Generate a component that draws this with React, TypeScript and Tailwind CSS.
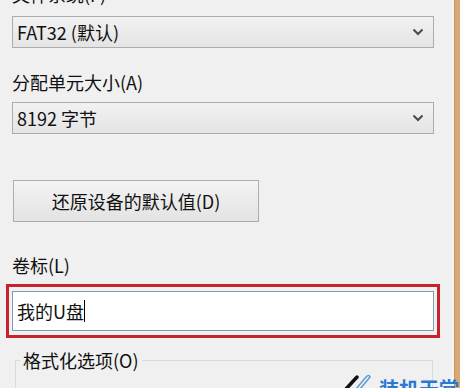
import React from "react";

const FONT = "font-['Noto_Sans_CJK_SC','Noto_Sans',sans-serif]";

const Chevron: React.FC = () => (
  <svg width="12" height="8" viewBox="0 0 12 8" aria-hidden="true">
    <path d="M1.5 1.5 L6 6 L10.5 1.5" fill="none" stroke="#4a4a4a" strokeWidth="2" />
  </svg>
);

const Select: React.FC<{ value: string }> = ({ value }) => (
  <div className="ml-[12px] w-[422px] h-[32px] shrink-0 border border-[#acacac] bg-gradient-to-b from-[#f2f2f2] to-[#e4e4e4] flex items-center justify-between pl-[4px] pr-[9px]">
    <span className="text-[18px] leading-[24px] text-[#111]">{value}</span>
    <Chevron />
  </div>
);

const Label: React.FC<{ text: string; className?: string }> = ({ text, className }) => (
  <div className={`ml-[12px] h-[24px] shrink-0 text-[18px] leading-[24px] text-[#111] ${className ?? ""}`}>{text}</div>
);

const PenIcon: React.FC = () => (
  <svg width="30" height="18" viewBox="0 0 30 18" aria-hidden="true">
    <path d="M3 17 L14 5" stroke="#111" strokeWidth="3.5" strokeLinecap="round" />
    <path d="M13 17 L23 5 Q26 2 27 5 L17 17" fill="none" stroke="#5b9bd8" strokeWidth="1.5" />
  </svg>
);

export default function App() {
  return (
    <div className={`relative w-[460px] h-[388px] overflow-hidden bg-[#f0f0f0] flex ${FONT}`}>
      <div className="flex-1 flex flex-col">
        <Label text="文件系统(F)" className="mt-[-18px]" />
        <div className="mt-[10px] shrink-0">
          <Select value="FAT32 (默认)" />
        </div>
        <Label text="分配单元大小(A)" className="mt-[22px]" />
        <div className="mt-[8px] shrink-0">
          <Select value="8192 字节" />
        </div>

        <button
          type="button"
          className="mt-[46px] ml-[13px] w-[246px] h-[42px] shrink-0 border border-[#adadad] bg-gradient-to-b from-[#f3f3f3] to-[#e3e3e3] text-[18px] leading-[24px] text-[#111] flex items-center justify-center"
        >
          还原设备的默认值(D)
        </button>

        <Label text="卷标(L)" className="mt-[31px]" />

        <div className="mt-[7px] ml-[6px] w-[434px] shrink-0 border-[3px] border-[#c8232c] px-[3px] py-[4px]">
          <div className="h-[40px] border border-[#7a9fb3] bg-white flex items-center pl-[4px]">
            <span className="text-[18px] leading-[24px] text-[#111]">我的U盘</span>
            <span className="w-px h-[22px] bg-black" />
          </div>
        </div>

        <fieldset className="mt-[10px] ml-[15px] w-[418px] h-[80px] shrink-0 border border-[#dadada] px-[4px]">
          <legend className="px-[3px] text-[18px] leading-[24px] text-[#111]">格式化选项(O)</legend>
        </fieldset>
      </div>

      <div className="w-[2px] bg-[#f8f4e9]" />
      <div className="w-[1px] bg-[#c49463]" />
      <div className="w-[5px] bg-[#daa878]" />

      <div className="absolute left-[343px] top-[372px] flex items-start gap-[6px]">
        <PenIcon />
        <span className="mt-[5px] text-[20px] leading-[24px] font-bold text-[#2a78d2]">装机天堂</span>
      </div>
    </div>
  );
}
